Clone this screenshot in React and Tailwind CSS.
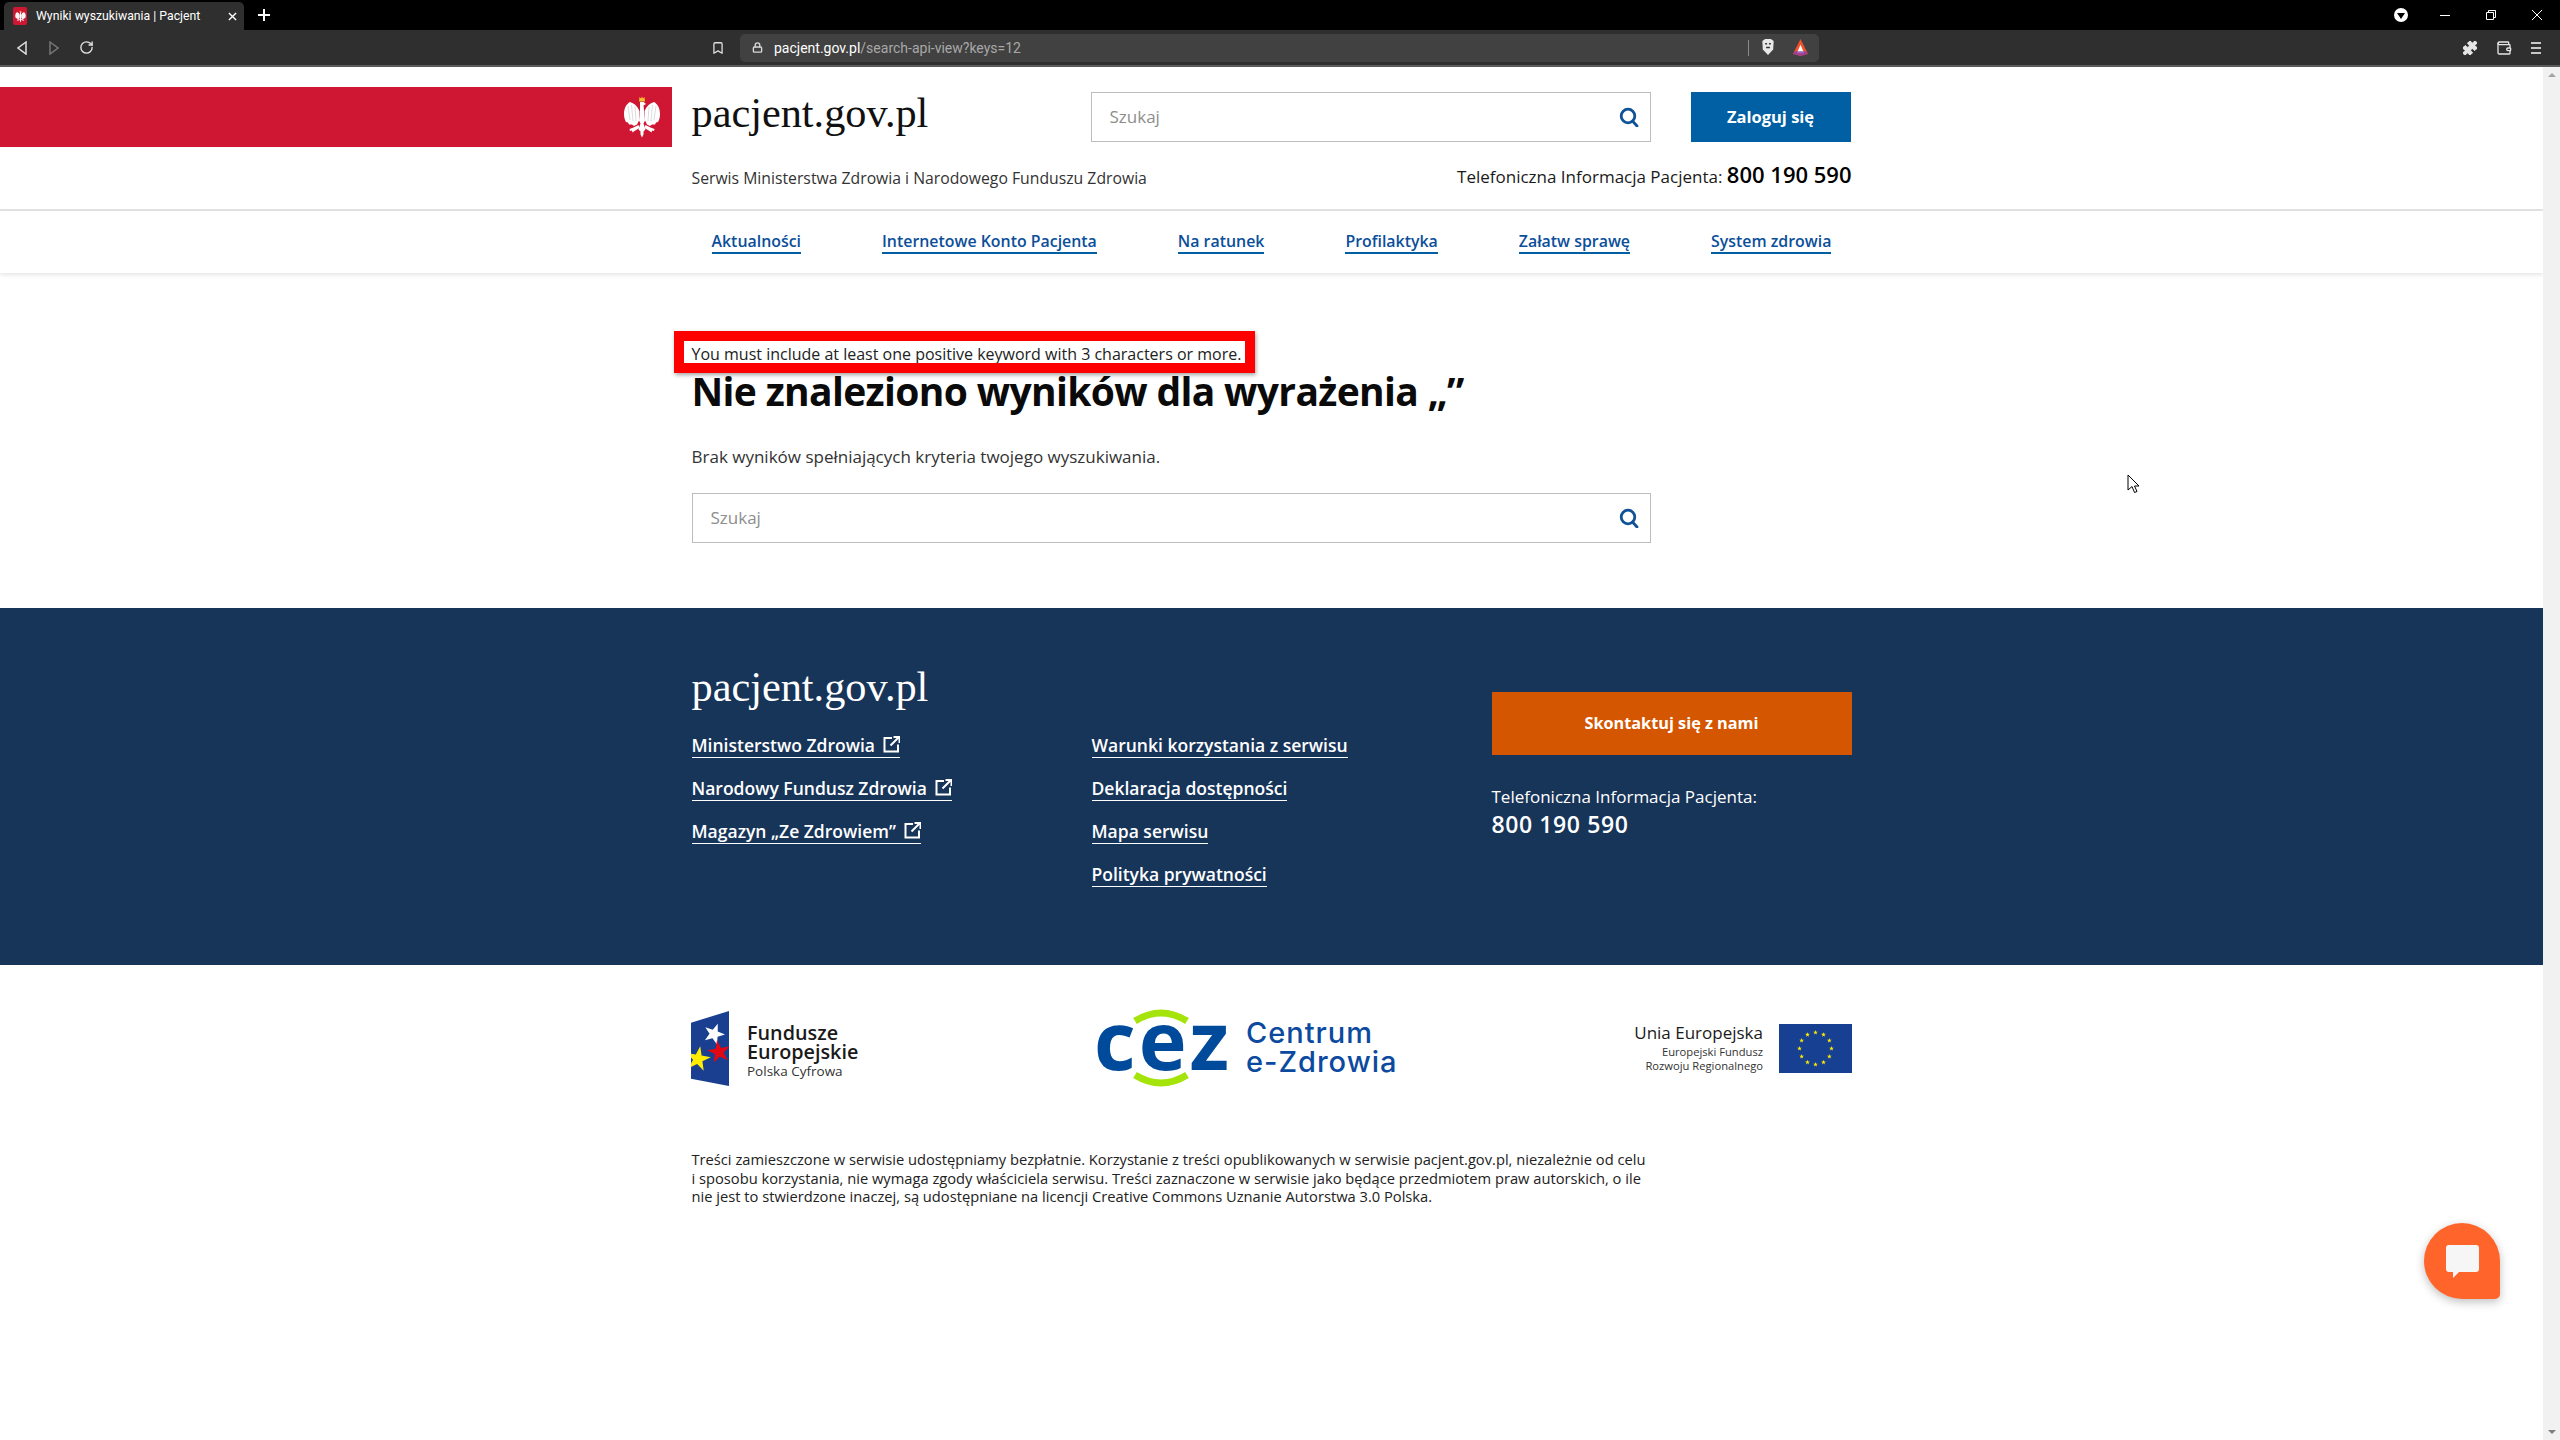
import { Bookmark, Lock, Puzzle, RotateCw, Wallet } from 'lucide-react';

const sans = "font-['Open_Sans',sans-serif]";

const navItems = ['Aktualności', 'Internetowe Konto Pacjenta', 'Na ratunek', 'Profilaktyka', 'Załatw sprawę', 'System zdrowia'];
const footerLeft = ['Ministerstwo Zdrowia', 'Narodowy Fundusz Zdrowia', 'Magazyn „Ze Zdrowiem”'];
const footerRight = ['Warunki korzystania z serwisu', 'Deklaracja dostępności', 'Mapa serwisu', 'Polityka prywatności'];

const starPoints = (cx, cy, R, r, rot = -90) => {
  const pts = [];
  for (let i = 0; i < 10; i++) {
    const a = ((rot + i * 36) * Math.PI) / 180;
    const d = i % 2 ? r : R;
    pts.push(`${(cx + d * Math.cos(a)).toFixed(2)},${(cy + d * Math.sin(a)).toFixed(2)}`);
  }
  return pts.join(' ');
};

function EagleSide() {
  return (
    <>
      <path d="M16.5 15C14.5 10 11 7 7 6 3.500 8 1 12 1 18c0 4 1 6 2 8l2 .5 1 2 3 0 2 1.500 3-1.500 2-4z" fill="#fff" />
      <path d="M5 10l2 14M8.500 9l1.500 16M12 11l1 14" stroke="#d4d4d4" strokeWidth="0.8" />
      <path d="M15.5 29l-5 2.500-4 1.500 .5 2 2-.5 .5 2 2-1.500 5-3z" fill="#fff" />
    </>
  );
}

function Eagle({ className }) {
  return (
    <svg viewBox="0 0 38 42" className={className}>
      <path d="M16.5 1l1.500 1.500L19 .5l1 2L21.5 1l.5 4.500h-6z" fill="#f2c230" />
      <EagleSide />
      <g transform="matrix(-1 0 0 1 38 0)"><EagleSide /></g>
      <path d="M17 6h3.500l2.500 2-2.500 1.500.5 5 1 10-1.500 3 2 6-2 2v3l-1.500 3-1.500-3v-3l-2-2 2-6-1.500-3 1-10z" fill="#fff" />
    </svg>
  );
}

function SearchIcon() {
  return (
    <svg viewBox="0 0 20 20" className="w-[20px] h-[20px]" fill="none" stroke="#0f5298" strokeWidth="2.8">
      <circle cx="9" cy="9" r="6.8" />
      <path d="M13.5 14l4.500 5" strokeLinecap="round" />
    </svg>
  );
}

function SearchBox({ className }) {
  return (
    <div className={`flex items-center justify-between h-[50px] border border-[#bdbdbd] bg-white pl-[18px] pr-[11px] ${className}`}>
      <span className={`${sans} text-[17px] text-[#8e8e8e]`}>Szukaj</span>
      <SearchIcon />
    </div>
  );
}

function ExternalIcon() {
  return (
    <svg viewBox="0 0 17 17" className="w-[17px] h-[17px] inline-block ml-[8px] -mt-[5px]" fill="none" stroke="#fff" strokeWidth="2">
      <path d="M9 2H1.500v13.500H15V8.500" />
      <path d="M7.5 9.500L15.500 1.500M10.500 1h6v6" />
    </svg>
  );
}

function FooterLink({ label, external }) {
  return (
    <li>
      <a className="inline-block h-[25px] leading-[24px] border-b-[1.5px] border-white text-[17.5px] font-semibold text-white whitespace-nowrap">
        {label}
        {external && <ExternalIcon />}
      </a>
    </li>
  );
}

function BrowserChrome() {
  return (
    <div className="flex-none">
      <div className="h-[30px] bg-black flex items-end relative">
        <div className="ml-[4px] w-[240px] h-[28px] bg-[#2f2f2f] rounded-t-[5px] flex items-center pl-[9px] pr-[7px]">
          <div className="w-[14px] h-[18px] bg-[#cf1733] rounded-[2px] flex items-center justify-center flex-none">
            <Eagle className="w-[11px] h-[13px]" />
          </div>
          <span className="ml-[9px] font-['Roboto',sans-serif] text-[12.25px] text-white whitespace-nowrap flex-1">Wyniki wyszukiwania | Pacjent</span>
          <svg viewBox="0 0 10 10" className="w-[9px] h-[9px]" stroke="#fff" strokeWidth="1.5"><path d="M1 1l8 8M9 1l-8 8" /></svg>
        </div>
        <svg viewBox="0 0 12 12" className="w-[12px] h-[12px] ml-[14px] mb-[9px]" stroke="#fff" strokeWidth="2"><path d="M6 0v12M0 6h12" /></svg>
        <div className="absolute right-0 top-0 h-[30px] flex items-center">
          <div className="w-[14px] h-[14px] rounded-full bg-white flex items-center justify-center mr-[32px]">
            <div className="w-0 h-0 border-x-[4px] border-x-transparent border-t-[6px] border-t-black mt-[1px]" />
          </div>
          <div className="w-[10px] h-px bg-white mr-[36px]" />
          <svg viewBox="0 0 10 10" className="w-[10px] h-[10px] mr-[36px]" fill="none" stroke="#fff"><path d="M.5 2.500h7v7h-7zM2.500 2.500v-2h7v7h-2" /></svg>
          <svg viewBox="0 0 10 10" className="w-[10px] h-[10px] mr-[18px]" stroke="#fff"><path d="M0 0l10 10M10 0L0 10" /></svg>
        </div>
      </div>
      <div className="h-[37px] bg-[#2f2f2f] border-b-2 border-[#5b5b5b] flex items-center relative">
        <svg viewBox="0 0 10 14" className="w-[10px] h-[14px] ml-[17px]" fill="none" stroke="#e0e0e0" strokeWidth="1.5"><path d="M9 1L1 7l8 6z" /></svg>
        <svg viewBox="0 0 10 14" className="w-[10px] h-[14px] ml-[22px]" fill="none" stroke="#777" strokeWidth="1.5"><path d="M1 1l8 6-8 6z" /></svg>
        <RotateCw className="w-[15px] h-[15px] ml-[20px] text-[#e0e0e0]" strokeWidth={2.2} />
        <Bookmark className="w-[14px] h-[16px] ml-[617px] text-[#e0e0e0]" strokeWidth={2.2} />
        <div className="ml-[15px] w-[1079px] h-[28px] rounded-[5px] bg-[#414141] flex items-center pl-[12px] pr-[10px]">
          <Lock className="w-[11px] h-[11px] text-[#d8d8d8]" strokeWidth={3} />
          <span className="ml-[11px] pt-[2px] font-['Roboto',sans-serif] text-[14px] text-[#a8a8a8] flex-1 whitespace-nowrap">
            <span className="text-white">pacjent.gov.pl</span>/search-api-view?keys=12
          </span>
          <div className="w-px h-[16px] bg-[#8a8a8a] mr-[12px]" />
          <svg viewBox="0 0 14 18" className="w-[14px] h-[17px] mr-[17px]"><path d="M1 2l3-2h6l3 2-.5 9L7 17 1.500 11z" fill="#e8e8e8" /><path d="M4 5h2M8 5h2M5 9h4" stroke="#333" strokeWidth="1.5" /></svg>
          <svg viewBox="0 0 18 18" className="w-[17px] h-[17px]"><path d="M9 0l8 16-8 2-8-2z" fill="#f0502a" /><path d="M9 6l4 9H5z" fill="#fff" /><path d="M1 16l8 2 8-2-2-3H3z" fill="#8a3aa8" opacity=".8" /></svg>
        </div>
        <Puzzle className="w-[16px] h-[16px] ml-[643px] text-[#e6e6e6]" fill="#e6e6e6" strokeWidth={1.5} />
        <Wallet className="w-[16px] h-[16px] ml-[18px] text-[#e6e6e6]" strokeWidth={2} />
        <div className="ml-[19px] flex flex-col gap-[3px] w-[10px]">
          <div className="h-[2px] bg-[#c8c8c8]" />
          <div className="h-[2px] bg-[#c8c8c8]" />
          <div className="h-[2px] bg-[#c8c8c8]" />
        </div>
      </div>
    </div>
  );
}

function Header() {
  return (
    <>
      <header className="grid grid-cols-[1fr_1160px_1fr] h-[144px] border-b-2 border-[#e2e2e2]">
        <div className="pr-[20px] pt-[20px]">
          <div className="h-[60px] bg-[#cf1733] flex items-center justify-end pr-[11px]">
            <Eagle className="w-[38px] h-[42px]" />
          </div>
        </div>
        <div>
          <div className="flex items-start pt-[25px]">
            <div className="w-[399px] h-[50px] -mt-[3px] font-['Liberation_Serif',serif] text-[42.3px] leading-[48px] text-[#111]">pacjent.gov.pl</div>
            <SearchBox className="w-[560px]" />
            <button className={`${sans} ml-[40px] w-[160px] h-[50px] bg-[#0060a3] text-white font-bold text-[16.5px]`}>Zaloguj się</button>
          </div>
          <div className={`${sans} flex items-end justify-between mt-[20px]`}>
            <span className="text-[15.75px] text-[#333]">Serwis Ministerstwa Zdrowia i Narodowego Funduszu Zdrowia</span>
            <span className="pb-[2px] text-[17px] text-[#1a1a1a] leading-[24px]">Telefoniczna Informacja Pacjenta: <span className="text-[22px] font-semibold text-black">800 190 590</span></span>
          </div>
        </div>
        <div />
      </header>
      <nav className={`${sans} h-[62px] shadow-[0_2px_4px_rgba(0,0,0,0.1)]`}>
        <div className="w-[1160px] mx-auto pl-[20px] pt-[18px] flex gap-[81px]">
          {navItems.map((item) => (
            <a key={item} className="h-[25px] leading-[24px] text-[15.9px] font-semibold text-[#0b4f9a] border-b-2 border-[#0060a3] whitespace-nowrap">{item}</a>
          ))}
        </div>
      </nav>
    </>
  );
}

function Results() {
  return (
    <main className={`${sans} w-[1160px] mx-auto pt-[69px] pb-[65px]`}>
      <div className="relative text-[16px] leading-[24px] text-[#222]">
        You must include at least one positive keyword with 3 characters or more.
        <div className="absolute -left-[18px] -top-[11px] w-[581px] h-[42px] border-[10px] border-[#ff0000] shadow-[1px_2px_4px_rgba(0,0,0,0.35)] pointer-events-none" />
      </div>
      <h1 className="text-[39px] leading-[50px] font-bold tracking-[-0.65px] text-[#0a0a0a]">Nie znaleziono wyników dla wyrażenia „”</h1>
      <p className="mt-[29px] text-[17px] leading-[24px] text-[#333]">Brak wyników spełniających kryteria twojego wyszukiwania.</p>
      <SearchBox className="w-[959px] mt-[24px]" />
    </main>
  );
}

function Footer() {
  return (
    <footer className="h-[357px] bg-[#173459] text-white">
      <div className={`${sans} w-[1160px] mx-auto pt-[55px] grid grid-cols-[400px_400px_1fr]`}>
        <div>
          <div className="font-['Liberation_Serif',serif] text-[42.3px] leading-[48px]">pacjent.gov.pl</div>
          <ul className="mt-[22px] flex flex-col gap-[18px]">
            {footerLeft.map((l) => <FooterLink key={l} label={l} external />)}
          </ul>
        </div>
        <ul className="pt-[70px] flex flex-col gap-[18px]">
          {footerRight.map((l) => <FooterLink key={l} label={l} />)}
        </ul>
        <div className="pt-[29px]">
          <button className="w-full h-[63px] bg-[#d55600] font-bold text-[16.25px]">Skontaktuj się z nami</button>
          <p className="mt-[30px] text-[17px] leading-[24px]">Telefoniczna Informacja Pacjenta:</p>
          <p className="text-[23px] leading-[30px] font-semibold tracking-[0.6px]">800 190 590</p>
        </div>
      </div>
    </footer>
  );
}

function FundsLogo() {
  return (
    <div className="flex items-center w-[165px] h-[80px]">
      <svg viewBox="0 0 38 75" className="w-[38px] h-[75px] flex-none">
        <polygon points="0,11.7 38,0 38,75 0,67.7" fill="#1a3f91" />
        <polygon points={starPoints(23, 23, 11, 4.5, -70)} fill="#fff" />
        <polygon points={starPoints(28, 41, 12, 4.5, -100)} fill="#e30613" />
        <polygon points={starPoints(7, 48, 13, 5, -80)} fill="#ffed00" />
      </svg>
      <div className={`${sans} ml-[18px] pt-[8px] text-[#1a1a1a]`}>
        <div className="text-[19.8px] leading-[19px] font-semibold">Fundusze</div>
        <div className="text-[19.8px] leading-[19px] font-semibold">Europejskie</div>
        <div className="text-[13.5px] leading-[21px] text-[#333] whitespace-nowrap">Polska Cyfrowa</div>
      </div>
    </div>
  );
}

function CezLogo() {
  return (
    <div className="flex items-center w-[298px] h-[78px]">
      <div className="relative w-[131px] h-[76px] flex-none">
        <svg viewBox="0 0 131 76" className="absolute inset-0 w-[131px] h-[76px] overflow-visible">
          <path d="M38 12Q64 -4 90 12" fill="none" stroke="#a5e40a" strokeWidth="7" />
          <path d="M38 66Q64 82 90 66" fill="none" stroke="#a5e40a" strokeWidth="7" />
        </svg>
        <div className={`${sans} -ml-[3px] h-[60px] text-[81px] leading-[60px] font-bold tracking-[3px] text-[#004a9c]`}>cez</div>
      </div>
      <div className="ml-[18px] font-['Inter',sans-serif] text-[#0b4a9e] text-[29px] leading-[29px] font-medium tracking-[1px] whitespace-nowrap">
        <div>Centrum</div>
        <div>e-Zdrowia</div>
      </div>
    </div>
  );
}

function EuLogo() {
  const stars = Array.from({ length: 12 }, (_, i) => {
    const a = (i * 30 * Math.PI) / 180;
    return starPoints(36.5 + 16 * Math.sin(a), 24.5 - 16 * Math.cos(a), 2.5, 1);
  });
  return (
    <div className="flex items-center justify-end w-[216px] h-[80px]">
      <div className={`${sans} text-right text-[#1a1a1a]`}>
        <div className="text-[17px] leading-[20px] font-medium whitespace-nowrap">Unia Europejska</div>
        <div className="mt-[2px] text-[11.2px] leading-[14px] text-[#333] whitespace-nowrap">Europejski Fundusz</div>
        <div className="text-[11.2px] leading-[14px] text-[#333] whitespace-nowrap">Rozwoju Regionalnego</div>
      </div>
      <svg viewBox="0 0 73 49" className="w-[73px] h-[49px] ml-[16px] flex-none">
        <rect width="73" height="49" fill="#174093" />
        {stars.map((s, i) => <polygon key={i} points={s} fill="#ffed00" />)}
      </svg>
    </div>
  );
}

export default function App() {
  return (
    <div className="h-screen flex flex-col overflow-hidden bg-white relative">
      <BrowserChrome />
      <div className="flex-1 flex min-h-0">
        <div className="flex-1 min-w-0">
          <Header />
          <Results />
          <Footer />
          <div className="w-[1161px] mx-auto pt-[43px] flex justify-between">
            <FundsLogo />
            <CezLogo />
            <EuLogo />
          </div>
          <p className={`${sans} w-[1160px] mx-auto pr-[200px] mt-[62px] text-[14.7px] leading-[18.5px] text-[#222]`}>
            Treści zamieszczone w serwisie udostępniamy bezpłatnie. Korzystanie z treści opublikowanych w serwisie pacjent.gov.pl, niezależnie od celu i sposobu korzystania, nie wymaga zgody właściciela serwisu. Treści zaznaczone w serwisie jako będące przedmiotem praw autorskich, o ile nie jest to stwierdzone inaczej, są udostępniane na licencji Creative Commons Uznanie Autorstwa 3.0 Polska.
          </p>
        </div>
        <div className="w-[17px] bg-[#f1f1f1] flex flex-col items-center justify-between py-[6px]">
          <div className="w-0 h-0 border-x-[4px] border-x-transparent border-b-[4px] border-b-[#a3a3a3]" />
          <div className="w-0 h-0 border-x-[4px] border-x-transparent border-t-[4px] border-t-[#7f7f7f]" />
        </div>
      </div>

      {/* chat bubble */}
      <div className="absolute left-[2424px] top-[1223px] w-[76px] h-[76px] bg-[#ff652a] rounded-[38px_38px_5px_38px] shadow-[0_3px_10px_rgba(0,0,0,0.25)] flex items-center justify-center">
        <svg viewBox="0 0 33 34" className="w-[33px] h-[34px] mt-[2px]"><path d="M3 0h27a3 3 0 0 1 3 3v21a3 3 0 0 1-3 3H13l-6 6v-6H3a3 3 0 0 1-3-3V3a3 3 0 0 1 3-3z" fill="#f6f6f6" /></svg>
      </div>

      {/* mouse cursor */}
      <svg viewBox="0 0 13 20" className="absolute left-[2127px] top-[474px] w-[13px] h-[20px]"><path d="M1 1v15l4-3.500 2.500 6 2.500-1-2.500-5.500H12z" fill="#fff" stroke="#000" strokeWidth="1" /></svg>
    </div>
  );
}
